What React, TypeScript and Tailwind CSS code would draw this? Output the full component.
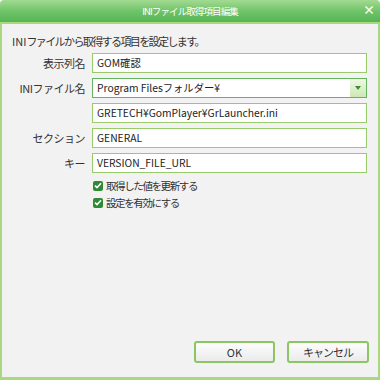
import React from "react";

const jp = { fontFamily: '"Noto Sans CJK JP", "Noto Sans", sans-serif' };

function Field({ label, value, select }: { label?: string; value: string; select?: boolean }) {
  return (
    <div className="flex items-center h-[20px]">
      <div className="w-[84px] text-right text-[11px] tracking-[-0.5px] text-[#333] leading-[14px] pr-[1px]">
        {label}
      </div>
      <div
        className={
          "ml-[6px] w-[275px] h-[20px] flex items-center bg-white border " +
          (select ? "border-[#62b55c]" : "border-[#98cc6a]")
        }
      >
        <span className="flex-1 pl-[4px] text-[10.3px] text-[#222] leading-[14px] whitespace-nowrap overflow-hidden">
          {value}
        </span>
        {select && (
          <span className="w-[16px] h-full flex items-center justify-center bg-gradient-to-b from-[#eef8e4] to-[#cde8b4]">
            <svg width="6" height="4" viewBox="0 0 6 4">
              <path d="M0 0h6L3 4z" fill="#3f8a33" />
            </svg>
          </span>
        )}
      </div>
    </div>
  );
}

function Check({ label }: { label: string }) {
  return (
    <div className="flex items-center h-[17px] pl-[91px]">
      <span className="w-[10px] h-[10px] rounded-[2px] bg-[#2f8a35] flex items-center justify-center">
        <svg width="8" height="7" viewBox="0 0 8 7">
          <path d="M1 3.6l2 2L7 1.2" stroke="#fff" strokeWidth="1.6" fill="none" />
        </svg>
      </span>
      <span className="ml-[3px] text-[10.5px] tracking-[-1.4px] text-[#333] leading-[14px]">{label}</span>
    </div>
  );
}

export default function App() {
  return (
    <div className="w-[380px] h-[380px] flex flex-col bg-white" style={jp}>
      <div className="relative h-[22px] shrink-0 rounded-t-[4px] bg-gradient-to-b from-[#a3da92] via-[#6fc469] to-[#56b455] flex items-center justify-center">
        <span className="text-white text-[9.5px] tracking-[-0.9px] leading-[12px]">INIファイル取得項目編集</span>
        <span className="absolute right-[5px] top-[4px] text-white text-[12px] font-bold leading-[12px]">×</span>
      </div>
      <div className="flex-1 flex flex-col bg-[#f2f2f2] border-x-2 border-b-[3px] border-t-2 border-[#a8d880] pt-[10px] pl-[10px] pr-[9px] pb-[14px]">
        <div className="text-[11px] tracking-[-1.6px] text-[#333] leading-[14px]">
          <span className="tracking-normal">INI</span>ファイルから取得する項目を設定します。
        </div>
        <div className="mt-[5px] -ml-[10px] flex flex-col gap-[5px]">
          <Field label="表示列名" value="GOM確認" />
          <Field label="INIファイル名" value="Program Filesフォルダー¥" select />
          <Field value="GRETECH¥GomPlayer¥GrLauncher.ini" />
          <Field label="セクション" value="GENERAL" />
          <Field label="キー" value="VERSION_FILE_URL" />
        </div>
        <div className="mt-[4px] -ml-[10px] flex flex-col">
          <Check label="取得した値を更新する" />
          <Check label="設定を有効にする" />
        </div>
        <div className="mt-auto flex justify-end gap-[12px]">
          <button className="w-[81px] h-[22px] rounded-[3px] border-2 border-[#8cc563] bg-gradient-to-b from-[#fdfdfd] to-[#ebebeb] text-[11px] text-[#333] leading-[14px]">
            OK
          </button>
          <button className="w-[82px] h-[22px] rounded-[3px] border-2 border-[#8cc563] bg-gradient-to-b from-[#fdfdfd] to-[#ebebeb] text-[11px] tracking-[-1px] text-[#333] leading-[14px]">
            キャンセル
          </button>
        </div>
      </div>
    </div>
  );
}
